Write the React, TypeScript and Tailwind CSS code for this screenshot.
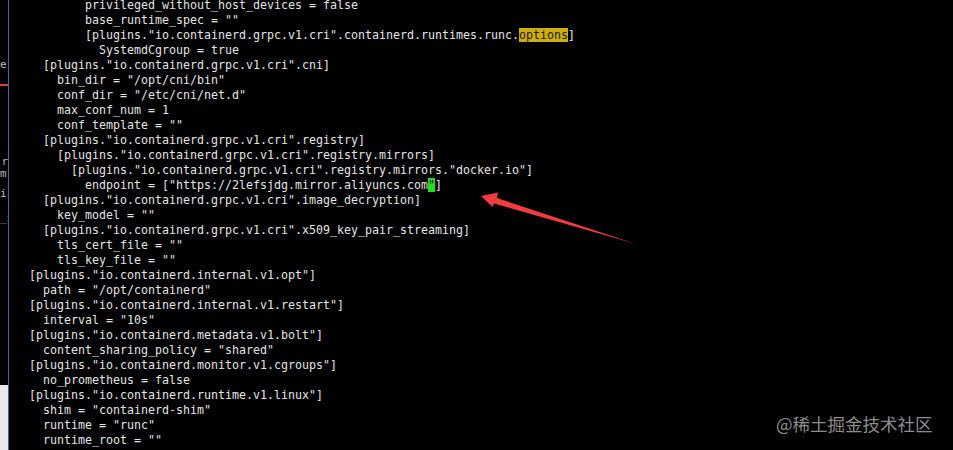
import React from "react";

type Line = { indent: number; text: React.ReactNode };

const L = (indent: number, text: React.ReactNode): Line => ({ indent, text });

const lines: Line[] = [
  L(10, "privileged_without_host_devices = false"),
  L(10, 'base_runtime_spec = ""'),
  L(
    10,
    <>
      {'[plugins."io.containerd.grpc.v1.cri".containerd.runtimes.runc.'}
      <span className="bg-[#cfae0c] text-[#1a1a1a]">options</span>
      {"]"}
    </>
  ),
  L(12, "SystemdCgroup = true"),
  L(4, '[plugins."io.containerd.grpc.v1.cri".cni]'),
  L(6, 'bin_dir = "/opt/cni/bin"'),
  L(6, 'conf_dir = "/etc/cni/net.d"'),
  L(6, "max_conf_num = 1"),
  L(6, 'conf_template = ""'),
  L(4, '[plugins."io.containerd.grpc.v1.cri".registry]'),
  L(6, '[plugins."io.containerd.grpc.v1.cri".registry.mirrors]'),
  L(8, '[plugins."io.containerd.grpc.v1.cri".registry.mirrors."docker.io"]'),
  L(
    10,
    <>
      {'endpoint = ["https://2lefsjdg.mirror.aliyuncs.com'}
      <span className="bg-[#1ee01e] text-[#0a0a0a]">"</span>
      {"]"}
    </>
  ),
  L(4, '[plugins."io.containerd.grpc.v1.cri".image_decryption]'),
  L(6, 'key_model = ""'),
  L(4, '[plugins."io.containerd.grpc.v1.cri".x509_key_pair_streaming]'),
  L(6, 'tls_cert_file = ""'),
  L(6, 'tls_key_file = ""'),
  L(2, '[plugins."io.containerd.internal.v1.opt"]'),
  L(4, 'path = "/opt/containerd"'),
  L(2, '[plugins."io.containerd.internal.v1.restart"]'),
  L(4, 'interval = "10s"'),
  L(2, '[plugins."io.containerd.metadata.v1.bolt"]'),
  L(4, 'content_sharing_policy = "shared"'),
  L(2, '[plugins."io.containerd.monitor.v1.cgroups"]'),
  L(4, "no_prometheus = false"),
  L(2, '[plugins."io.containerd.runtime.v1.linux"]'),
  L(4, 'shim = "containerd-shim"'),
  L(4, 'runtime = "runc"'),
  L(4, 'runtime_root = ""'),
];

function LeftStrip() {
  return (
    <div
      className="w-[8px] shrink-0 flex flex-col overflow-hidden bg-black text-[#b8b8b8] text-[11px] leading-[12px]"
      style={{ fontFamily: '"DejaVu Sans Mono", monospace' }}
    >
      <div className="h-[59px] shrink-0" />
      <div className="h-[12px] shrink-0 whitespace-pre">e</div>
      <div className="h-[13px] shrink-0" />
      <div className="h-[2px] shrink-0 bg-[#d93a3a]" />
      <div className="h-[70px] shrink-0" />
      <div className="h-[12px] shrink-0 whitespace-pre text-right">r</div>
      <div className="h-[12px] shrink-0 whitespace-pre">m:</div>
      <div className="h-[8px] shrink-0" />
      <div className="h-[12px] shrink-0 whitespace-pre">i</div>
      <div className="h-[12px] shrink-0" />
      <div className="h-[12px] shrink-0 whitespace-pre text-[#8a8a8a]">_s</div>
      <div className="flex-1" />
      <div className="h-[65px] shrink-0 bg-[#e9e9e9]" />
    </div>
  );
}

export default function App() {
  return (
    <div className="relative w-[953px] h-[450px] bg-black overflow-hidden flex">
      <LeftStrip />
      <div className="w-[1px] shrink-0 bg-[#3f6c9c]" />
      <div
        className="flex-1 pl-[6px] -mt-[2px] text-[#e4e4e4] text-[11.63px] leading-[15px] whitespace-pre"
        style={{ fontFamily: '"DejaVu Sans Mono", monospace' }}
      >
        {lines.map((l, i) => (
          <div key={i}>
            {" ".repeat(l.indent)}
            {l.text}
          </div>
        ))}
      </div>

      <svg
        className="absolute inset-0 pointer-events-none"
        width={953}
        height={450}
        viewBox="0 0 953 450"
      >
        <polygon
          points="481,196 498,192.5 497,198 636,244 494,203.5 492.5,207"
          fill="#f03c3c"
        />
      </svg>

      <div
        className="absolute left-[776px] top-[412px] text-[17.5px] leading-[24px] text-[#8c8c8c]"
        style={{ fontFamily: '"Noto Sans CJK SC", "Noto Sans", sans-serif' }}
      >
        @稀土掘金技术社区
      </div>
    </div>
  );
}
